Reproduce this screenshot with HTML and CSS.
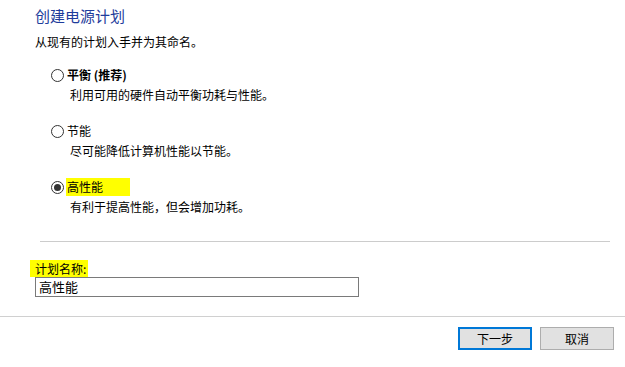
FILE: index.html
```html
<!DOCTYPE html>
<html lang="zh-CN">
<head>
<meta charset="utf-8">
<title>创建电源计划</title>
<link rel="stylesheet" href="styles.css">
</head>
<body>
<div class="page">
  <div class="content">
    <h1 class="title">创建电源计划</h1>
    <p class="subtitle">从现有的计划入手并为其命名。</p>
    <div class="options">
      <div class="option">
        <div class="opt-row"><span class="radio"></span><span class="opt-label bold">平衡 (推荐)</span></div>
        <div class="opt-desc">利用可用的硬件自动平衡功耗与性能。</div>
      </div>
      <div class="option">
        <div class="opt-row"><span class="radio"></span><span class="opt-label">节能</span></div>
        <div class="opt-desc">尽可能降低计算机性能以节能。</div>
      </div>
      <div class="option">
        <div class="opt-row"><span class="radio checked"></span><span class="opt-label hl-wide">高性能</span></div>
        <div class="opt-desc">有利于提高性能，但会增加功耗。</div>
      </div>
    </div>
    <div class="sep"></div>
    <div class="name-label"><span class="hl-name">计划名称:</span></div>
    <div class="name-input">高性能</div>
  </div>
  <div class="footer">
    <button class="btn primary">下一步</button>
    <button class="btn">取消</button>
  </div>
</div>
</body>
</html>
```

FILE: styles.css
```css
html, body {
  margin: 0;
  padding: 0;
  background: #ffffff;
}
body {
  font-family: "Noto Sans CJK SC", "Noto Sans", sans-serif;
  font-size: 12px;
  color: #000000;
}
.page {
  width: 625px;
  height: 367px;
}
.content {
  padding: 6px 0 0 35px;
}
.title {
  margin: 0;
  font-size: 15px;
  line-height: 20px;
  font-weight: normal;
  color: #1e3c9b;
}
.subtitle {
  margin: 8px 0 0 0;
  line-height: 16px;
}
.options {
  margin-top: 17px;
  padding-left: 16px;
  display: flex;
  flex-direction: column;
  gap: 20px;
}
.option {
  display: flex;
  flex-direction: column;
  gap: 4px;
}
.opt-row {
  display: flex;
  align-items: center;
  height: 16px;
}
.radio {
  box-sizing: border-box;
  width: 13px;
  height: 13px;
  border: 1px solid #333333;
  border-radius: 50%;
  background: #ffffff;
  display: flex;
  align-items: center;
  justify-content: center;
}
.radio.checked::after {
  content: "";
  width: 7px;
  height: 7px;
  border-radius: 50%;
  background: #333333;
}
.opt-label {
  margin-left: 3px;
  line-height: 16px;
}
.bold {
  font-weight: bold;
}
.hl-wide {
  margin-left: 2px;
  padding: 0 27px 1px 1px;
  background: #ffff00;
  line-height: 17px;
}
.opt-desc {
  padding-left: 19px;
  line-height: 16px;
}
.sep {
  margin: 26px 0 0 5px;
  width: 570px;
  height: 1px;
  background: #cccccc;
}
.name-label {
  margin-top: 18px;
  height: 17px;
  line-height: 17px;
}
.hl-name {
  display: inline-block;
  margin-left: -5px;
  padding: 0 2px 0 5px;
  background: #ffff00;
  line-height: 17px;
}
.name-input {
  box-sizing: border-box;
  width: 324px;
  height: 20px;
  border: 1px solid #7a7a7a;
  padding-left: 3px;
  font-size: 13px;
  line-height: 18px;
}
.footer {
  margin-top: 19px;
  border-top: 1px solid #d0d0d0;
  padding: 10px 11px 0 0;
  display: flex;
  justify-content: flex-end;
  gap: 8px;
}
.btn {
  box-sizing: border-box;
  width: 74px;
  height: 23px;
  margin: 0;
  padding: 0;
  font-family: "Noto Sans CJK SC", "Noto Sans", sans-serif;
  font-size: 12px;
  color: #000000;
  background: #e1e1e1;
  border: 1px solid #adadad;
  border-radius: 0;
}
.btn.primary {
  border: 2px solid #0078d7;
}
```
